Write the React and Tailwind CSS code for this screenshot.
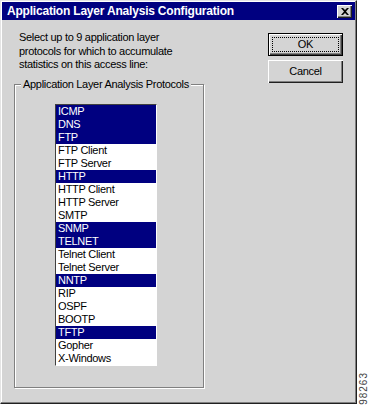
import React from "react";

// protocol list, second value = selected
const protocols = [
  ["ICMP", true],
  ["DNS", true],
  ["FTP", true],
  ["FTP Client", false],
  ["FTP Server", false],
  ["HTTP", true],
  ["HTTP Client", false],
  ["HTTP Server", false],
  ["SMTP", false],
  ["SNMP", true],
  ["TELNET", true],
  ["Telnet Client", false],
  ["Telnet Server", false],
  ["NNTP", true],
  ["RIP", false],
  ["OSPF", false],
  ["BOOTP", false],
  ["TFTP", true],
  ["Gopher", false],
  ["X-Windows", false],
];

const CloseButton = () => (
  <div className="w-[15px] h-[13px] bg-[#d4d4d4] flex items-center justify-center shadow-[inset_1px_1px_0_#fff,inset_-1px_-1px_0_#202020,inset_-2px_-2px_0_#808080]">
    <svg width="8" height="7" viewBox="0 0 8 7">
      <path d="M0 0h2l2 2 2-2h2L5 3.5 8 7H6L4 5 2 7H0l3-3.5z" fill="#000" />
    </svg>
  </div>
);

export default function App() {
  return (
    <div className="flex w-[370px] h-[405px] bg-white font-['Liberation_Sans',Arial,sans-serif] text-[11px] text-black tracking-[-0.3px]">
      {/* dialog */}
      <div className="w-[357px] h-[404px] bg-[#d4d4d4] border border-t-[#e4e4e4] border-l-[#e4e4e4] border-r-[#202020] border-b-[#202020] p-px shadow-[inset_-1px_-1px_0_#808080,inset_1px_1px_0_#fff] flex flex-col">
        {/* title bar */}
        <div className="h-[18px] bg-[#000080] flex items-center justify-between pl-[5px] pr-[3px]">
          <span className="text-white font-bold text-[12px] tracking-[-0.2px] leading-none">
            Application Layer Analysis Configuration
          </span>
          <CloseButton />
        </div>

        <div className="flex flex-1">
          {/* left column */}
          <div className="pl-[12px] pt-[11px]">
            <p className="ml-[5px] leading-[13.5px]">
              Select up to 9 application layer
              <br />
              protocols for which to accumulate
              <br />
              statistics on this access line:
            </p>

            <fieldset className="mt-[6px] w-[190px] border border-[#808080] shadow-[1px_1px_0_#fff,inset_1px_1px_0_#fff] pb-[21px]">
              <legend className="ml-[6px] px-[2px] leading-[13px] bg-[#d4d4d4]">
                Application Layer Analysis Protocols
              </legend>
              <div className="mt-[13px] ml-[40px] w-[102px] bg-white border border-t-[#404040] border-l-[#404040] border-r-white border-b-white">
                {protocols.map(([name, sel]) => (
                  <div
                    key={name}
                    className={
                      sel
                        ? "h-[13px] leading-[13px] pl-[2px] bg-[#000080] text-white"
                        : "h-[13px] leading-[13px] pl-[2px] text-black"
                    }
                  >
                    {name}
                  </div>
                ))}
              </div>
            </fieldset>
          </div>

          {/* right column: buttons */}
          <div className="ml-auto mr-[12px] pt-[13px] flex flex-col gap-[4px]">
            <button className="w-[75px] h-[23px] border border-black bg-[#d4d4d4] p-[3px] shadow-[inset_1px_1px_0_#fff,inset_-1px_-1px_0_#404040,inset_-2px_-2px_0_#808080]">
              <div className="h-full border border-dotted border-black flex items-center justify-center leading-none">
                OK
              </div>
            </button>
            <button className="w-[75px] h-[23px] bg-[#d4d4d4] flex items-center justify-center leading-none shadow-[inset_1px_1px_0_#fff,inset_-1px_-1px_0_#202020,inset_-2px_-2px_0_#808080]">
              Cancel
            </button>
          </div>
        </div>
      </div>

      {/* figure number */}
      <div className="flex-1 flex items-end justify-center">
        <span className="[writing-mode:vertical-rl] rotate-180 text-[10px] tracking-[1px] leading-none text-[#444]">
          98263
        </span>
      </div>
    </div>
  );
}
